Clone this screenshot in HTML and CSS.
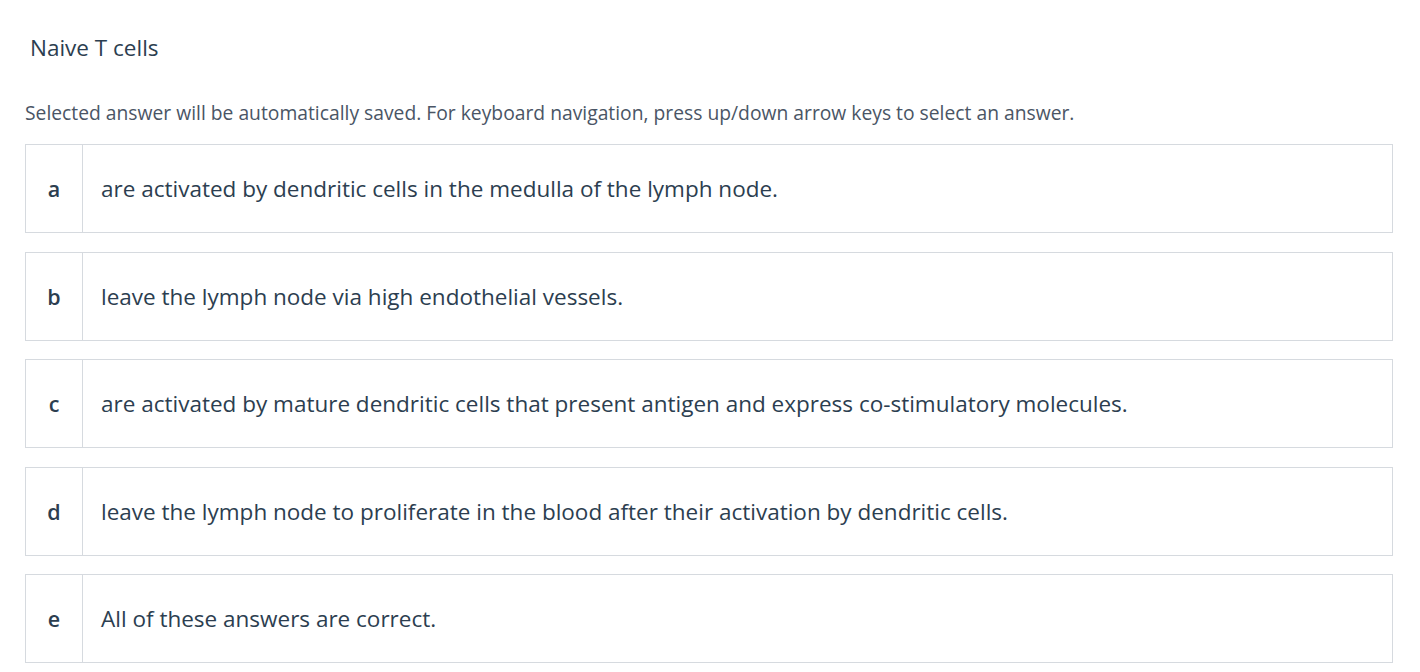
FILE: index.html
```html
<!DOCTYPE html>
<html>
<head>
<meta charset="utf-8">
<link rel="stylesheet" href="styles.css">
</head>
<body>
<main class="question">
  <h1 class="title">Naive T cells</h1>
  <p class="hint">Selected answer will be automatically saved. For keyboard navigation, press up/down arrow keys to select an answer.</p>
  <ul class="answers">
    <li class="answer"><span class="letter">a</span><span class="text">are activated by dendritic cells in the medulla of the lymph node.</span></li>
    <li class="answer"><span class="letter">b</span><span class="text">leave the lymph node via high endothelial vessels.</span></li>
    <li class="answer"><span class="letter">c</span><span class="text">are activated by mature dendritic cells that present antigen and express co-stimulatory molecules.</span></li>
    <li class="answer"><span class="letter">d</span><span class="text">leave the lymph node to proliferate in the blood after their activation by dendritic cells.</span></li>
    <li class="answer"><span class="letter">e</span><span class="text">All of these answers are correct.</span></li>
  </ul>
</main>
</body>
</html>
```
FILE: styles.css
```css
html, body {
  margin: 0;
  padding: 0;
  background: #ffffff;
}
body {
  font-family: "Open Sans", "Liberation Sans", sans-serif;
  color: #2c3e50;
}
.question {
  padding: 0 27px 0 25px;
}
.title {
  margin: 0;
  padding: 34px 0 0 5px;
  font-size: 22.5px;
  font-weight: 400;
  line-height: 28px;
  color: #2c3e50;
}
.hint {
  margin: 0;
  padding-top: 39px;
  font-size: 19.3px;
  line-height: 24px;
  color: #4a5565;
}
.answers {
  list-style: none;
  margin: 19px 0 0 0;
  padding: 0;
  display: flex;
  flex-direction: column;
  gap: 18.5px;
}
.answer {
  display: flex;
  height: 89px;
  box-sizing: border-box;
  border: 1px solid #d6dadf;
}
.letter {
  width: 56px;
  flex: none;
  border-right: 1px solid #d6dadf;
  display: flex;
  align-items: center;
  justify-content: center;
  font-size: 21.5px;
  font-weight: 600;
  color: #2c3e50;
}
.text {
  display: flex;
  align-items: center;
  padding-left: 18px;
  font-size: 22.5px;
  color: #2c3e50;
}
```
